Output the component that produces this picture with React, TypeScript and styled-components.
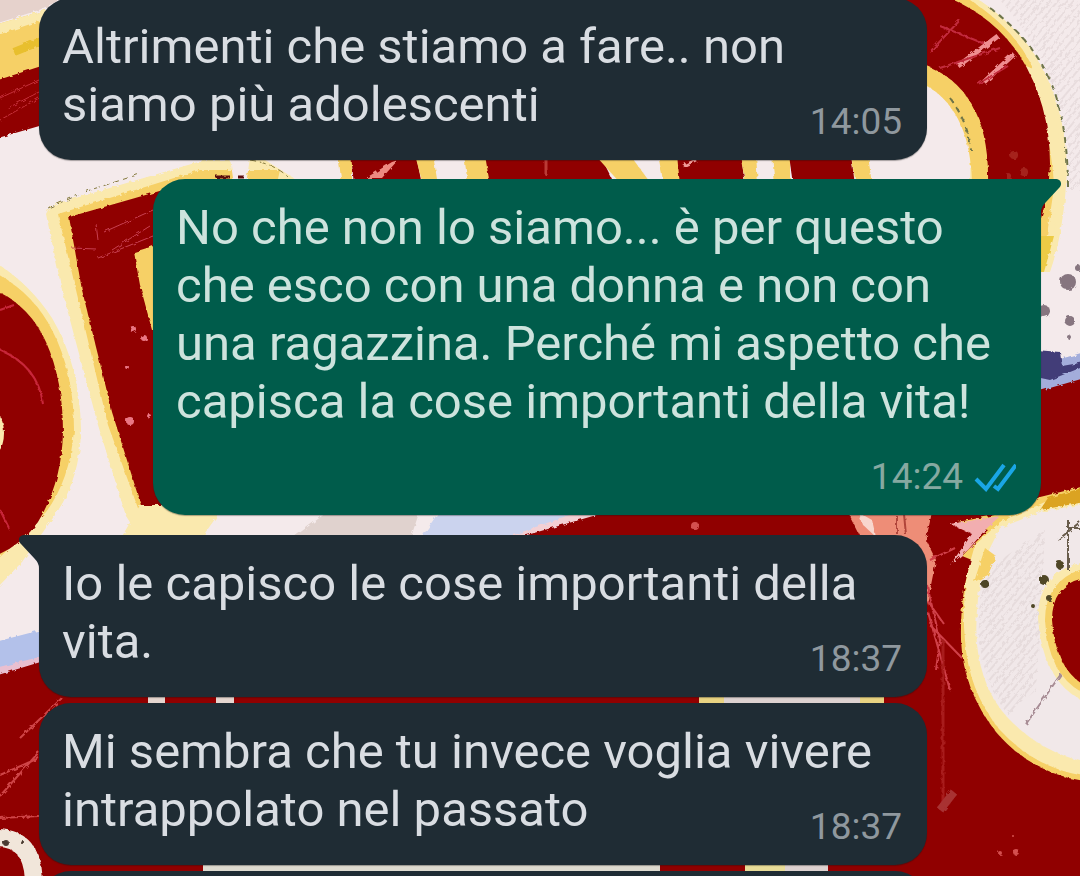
import React from "react";
import styled, { createGlobalStyle, css } from "styled-components";

const INCOMING = "#1f2c34";
const OUTGOING = "#005c4b";

const GlobalStyle = createGlobalStyle`
  *, *::before, *::after { box-sizing: border-box; }
  body {
    margin: 0;
    background: #8f0000;
    font-family: Roboto, "Liberation Sans", sans-serif;
  }
`;

const Screen = styled.main`
  position: relative;
  height: 100vh;
  overflow: hidden;
  isolation: isolate;
`;

const WallpaperSvg = styled.svg`
  position: absolute;
  inset: 0;
  z-index: -1;
  width: 100%;
  height: 100%;
`;

const Thread = styled.ol`
  display: flex;
  flex-direction: column;
  list-style: none;
  margin: -2px 0 0;
  padding: 0 39px;
`;

const Row = styled.li<{ $own: boolean; $gap: number }>`
  display: flex;
  justify-content: ${(p) => (p.$own ? "flex-end" : "flex-start")};
  margin-top: ${(p) => p.$gap}px;
`;

const Bubble = styled.article<{ $own: boolean; $tail: boolean }>`
  position: relative;
  display: flow-root;
  width: calc(100% - 114px);
  min-height: 162px;
  padding: 20px 25px 16px 23px;
  border-radius: 32px;
  font-size: 49px;
  line-height: 58px;
  color: ${(p) => (p.$own ? "#cde3dd" : "#d9dde2")};
  background: ${(p) => (p.$own ? OUTGOING : INCOMING)};
  box-shadow: 0 1px 1px rgba(20, 20, 20, 0.35);
  ${(p) =>
    p.$tail &&
    (p.$own
      ? css`border-top-right-radius: 0;`
      : css`border-top-left-radius: 0;`)}
`;

const TailSvg = styled.svg<{ $own: boolean }>`
  position: absolute;
  top: 0;
  width: 21px;
  height: 34px;
  fill: ${(p) => (p.$own ? OUTGOING : INCOMING)};
  ${(p) => (p.$own ? "left: 100%;" : "right: 100%; transform: scaleX(-1);")}
`;

const Text = styled.span`
  overflow-wrap: break-word;
`;

/* Floats beside the last line when there is room, and drops below it otherwise. */
const Meta = styled.span<{ $own: boolean }>`
  float: right;
  display: flex;
  align-items: center;
  gap: 11px;
  margin-top: 24px;
  font-size: 37px;
  line-height: 44px;
  color: ${(p) => (p.$own ? "#86a9a1" : "#8f989e")};
`;

const CheckSvg = styled.svg`
  width: 42px;
  height: 30px;
  fill: none;
  stroke: #1aa6e6;
  stroke-width: 4;
`;

type Message = {
  text: string;
  time: string;
  own?: boolean;
  tail?: boolean;
  gap: number;
};

const messages: Message[] = [
  { text: "Altrimenti che stiamo a fare.. non siamo più adolescenti", time: "14:05", gap: 0 },
  {
    text: "No che non lo siamo... è per questo che esco con una donna e non con una ragazzina. Perché mi aspetto che capisca la cose importanti della vita!",
    time: "14:24",
    own: true,
    tail: true,
    gap: 19,
  },
  { text: "Io le capisco le cose importanti della vita.", time: "18:37", tail: true, gap: 20 },
  { text: "Mi sembra che tu invece voglia vivere intrappolato nel passato", time: "18:37", gap: 6 },
];

const RED = "#900000";
const GOLD = "#f6d066";
const PALE = "#fae9ae";
const PAPER = "#f4eaeb";

function Wallpaper() {
  return (
    <WallpaperSvg viewBox="0 0 1080 876" preserveAspectRatio="xMidYMid slice" aria-hidden="true">
      <defs>
        <filter id="rough" x="0" y="0" width="100%" height="100%">
          <feTurbulence type="fractalNoise" baseFrequency="0.22" numOctaves="2" seed="4" result="n" />
          <feDisplacementMap in="SourceGraphic" in2="n" scale="4" />
        </filter>
        <pattern id="hatch" width="6" height="6" patternUnits="userSpaceOnUse" patternTransform="rotate(-50)">
          <path d="M0 1H6" stroke="#cdbcbd" strokeWidth="1" opacity="0.6" />
        </pattern>
      </defs>
      <rect width="1080" height="876" fill={PAPER} />
      <g filter="url(#rough)">
        {/* top left stroke */}
        <path d="M-5 -5H70L39 10L-5 24Z" fill="#e6d2cc" />
        <path d="M-5 25L60 6V70L-5 82Z" fill={GOLD} />
        <path d="M-5 25L60 6V14L-5 36Z" fill={PALE} />
        <path d="M14 52L44 40" stroke="#e8bf2e" strokeWidth="8" />
        <path d="M-5 81L60 60V120L-5 139Z" fill={RED} />
        <path d="M0 98L39 80M0 120L39 98M8 108L39 92" stroke="#c5303a" strokeWidth="1" />

        {/* slanted letter behind the second bubble */}
        <path d="M46 214Q48 206 62 202L205 160H265L300 182L215 516L140 538L126 516L98 425L62 290Z" fill={PALE} />
        <path d="M58 214L200 170H280L200 520L143 522L108 425L76 290Z" fill={GOLD} />
        <path d="M69 217L170 188L210 520L145 518L112 412L82 290Z" fill={RED} />
        <path d="M230 158H250L246 184H234Z" fill={PAPER} />
        <path d="M134 252L160 244V330H152L140 285Z" fill={GOLD} />
        <path d="M72 248L96 249M96 224L98 240M104 232L153 210M98 258L153 236M112 250L150 226" stroke="#c94052" strokeWidth="1" />
        <path d="M48 208L90 190L140 174M250 160Q275 164 288 177" fill="none" stroke="#83783c" strokeWidth="1" strokeDasharray="6 4" />
        <path d="M216 177H230M238 177H244" stroke="#5c0b08" strokeWidth="3" />
        <g fill="#ea7784">
          <circle cx="133" cy="329" r="3" />
          <circle cx="144" cy="338" r="3" />
          <circle cx="130" cy="421" r="4" />
          <circle cx="127" cy="367" r="2" />
          <circle cx="149" cy="416" r="2" />
        </g>

        {/* round letter at the left edge */}
        <path d="M-5 262Q30 284 52 318Q80 365 81 430Q80 480 55 515L22 562L-5 590Z" fill={PALE} />
        <path d="M-5 272Q34 294 52 330Q74 372 74 430Q70 480 46 512L-5 562Z" fill={GOLD} />
        <path d="M-5 290Q30 306 46 342Q63 380 63 432Q62 482 38 522Q22 545 -5 556Z" fill={RED} />
        <path d="M-5 410Q4 418 4 433Q4 448 -5 456Z" fill={PALE} />
        <path d="M0 310L14 305M0 350Q38 366 43 404M0 510L10 530" fill="none" stroke="#c8283a" strokeWidth="2" />

        {/* strokes showing between the first two bubbles */}
        <path d="M338 155H352V185H342Z" fill={GOLD} />
        <path d="M351 155H416L422 185H354Z" fill={RED} />
        <path d="M392 162L366 178H382L398 160Z" fill="#ee8a80" />
        <path d="M415 155H490V185H423Z" fill={GOLD} />
        <path d="M433 155H464L468 185H438Z" fill={PAPER} />
        <path d="M485 155H600L615 185H490Z" fill={RED} />
        <path d="M595 155H677L681 185H622Z" fill={GOLD} />
        <path d="M630 155H658L664 185H652Z" fill={PAPER} />
        <path d="M677 155H741L745 185H680Z" fill={RED} />
        <path d="M740 155H790V185H746Z" fill={GOLD} />
        <path d="M756 155H772L775 185H758Z" fill={PAPER} />
        <path d="M789 155H851L855 185H793Z" fill={RED} />
        <path d="M851 155H868L872 185H856Z" fill={GOLD} />
        <path d="M546 160V176" stroke="#bb3a34" strokeWidth="3" />
        <path d="M683 166L696 160" stroke="#ef9a96" strokeWidth="3" />

        {/* bowl of the top right letter */}
        <path d="M900 -5H972Q1014 22 1037 58Q1066 108 1067 170Q1064 232 1050 272H1036V182H970Q974 100 920 84Z" fill={PALE} />
        <path d="M900 -5H962Q1010 24 1030 62Q1054 112 1057 168L1042 268H1036V182H972Q970 106 920 82Z" fill={GOLD} />
        <path d="M1036 70Q1062 116 1062 180L1054 232Q1060 150 1026 66Z" fill={PALE} />
        <path d="M900 -5H942Q992 14 1020 56Q1050 104 1050 164Q1049 194 1040 222L1036 182H988Q990 88 922 64Z" fill={RED} />
        <path d="M998 36L958 66M1014 54L984 82" stroke="#ef8d90" strokeWidth="5" />
        <path d="M940 68L1000 48M978 84L1008 66M940 26L985 44M930 52L960 20" stroke="#c22c3c" strokeWidth="2" />
        <path d="M1000 0L1085 -5V190L1070 190Q1072 80 1000 0Z" fill="url(#hatch)" />
        <path d="M990 8Q1036 42 1054 90Q1068 130 1068 190M950 98Q968 122 971 150" fill="none" stroke="#6e7448" strokeWidth="2" strokeDasharray="6 5" />
        <g fill="#a5231f">
          <circle cx="1014" cy="155" r="4" />
          <circle cx="1024" cy="172" r="4" />
          <circle cx="1009" cy="177" r="3" />
        </g>
        <path d="M1036 236H1054L1044 272H1036Z" fill="#eccb45" />

        {/* ink spots and blue wash right of the outgoing bubble */}
        <g fill="#86757f">
          <circle cx="1068" cy="282" r="8" />
          <circle cx="1044" cy="311" r="6" />
          <circle cx="1070" cy="321" r="5" />
          <circle cx="1078" cy="268" r="3" />
          <circle cx="1069" cy="337" r="2" />
        </g>
        <path d="M1036 366L1085 352V385L1036 396Z" fill="#a3addb" />
        <path d="M1036 350L1060 352L1062 366L1085 362V366L1050 380L1036 377Z" fill="#433e78" />
        <path d="M1036 392L1085 378V500L1036 520Z" fill={RED} />

        {/* wash under the outgoing bubble */}
        <path d="M140 505H225L200 540H120Z" fill={PALE} />
        <path d="M290 540L330 510H420L410 540Z" fill="#e0d2ce" />
        <path d="M420 540L440 510H600L520 540Z" fill="#cbd3ee" />
        <path d="M500 540L572 514H610L530 540Z" fill="#f3d0d4" />

        {/* red field filling the lower part */}
        <path d="M-5 642L60 625V668L-5 678Z" fill="#b3c1ea" />
        <path d="M-5 668L60 652V670L-5 680Z" fill="#e9bfd0" />
        <path d="M-5 676L60 656L520 537L600 514L1085 495V885H-5Z" fill={RED} />
        <path d="M0 796L39 752M0 775L39 758M20 738L62 698M0 818L39 816" stroke="#cf4446" strokeWidth="2" />
        <path d="M-5 838Q34 836 34 885" fill="none" stroke="#f1e6da" strokeWidth="18" />
        <circle cx="6" cy="843" r="3" fill="#4a3a30" />
        <circle cx="22" cy="842" r="2" fill="#4a3a30" />

        {/* pink splash */}
        <path d="M848 512H932L926 540L936 560L926 610L915 545L885 540L860 536Z" fill="#ee8d77" />
        <path d="M858 512L872 520L876 537L862 524Z" fill="#f8d6cd" />
        <path d="M904 514L906 535M897 516V534" stroke="#b0453a" strokeWidth="2" />
        <path d="M927 585L940 640L936 670M928 612L950 690M930 625L962 658M930 560L955 548M927 600L944 624" fill="none" stroke="#d04048" strokeWidth="2" />
        <path d="M943 640V810" stroke="#a81a1c" strokeWidth="3" />
        <path d="M940 810L954 792" stroke="#a83033" strokeWidth="8" />

        {/* large ring at the right edge */}
        <path d="M1085 486L1040 497L1000 514L958 522L988 530L962 556L972 560Q960 590 961 640Q963 690 996 732Q1032 774 1085 781Z" fill={GOLD} />
        <path d="M1085 492L1045 502L1000 522L975 545Q960 590 965 640Q968 690 999 729Q1034 768 1085 776Z" fill={PALE} />
        <path d="M1085 504L1040 512L1000 528L984 560Q974 610 977 645Q982 690 1008 718Q1040 752 1085 762Z" fill="#f1e8e9" />
        <path d="M985 570L1045 530L1036 690L1008 715Q965 660 985 570Z" fill="url(#hatch)" />
        <path d="M1085 487L1048 498L1040 510L1085 502Z" fill="#dba322" />
        <path d="M985 548L996 556L988 575L974 582Z" fill={GOLD} />
        <path d="M950 524L1000 516L985 530L968 550L950 565L972 534Z" fill="#f2aeb0" />
        <path d="M1085 562Q1038 570 1038 618Q1042 682 1085 702Z" fill={PALE} />
        <path d="M1085 568Q1045 580 1045 620Q1048 676 1085 694Z" fill={GOLD} />
        <path d="M1085 578Q1052 584 1052 620Q1055 668 1085 686Z" fill={RED} />
        <path d="M1061 674L1026 724" stroke="#a78c94" strokeWidth="2" />
        <path d="M1068 520V570M1068 528H1080M1058 540L1080 522" stroke="#685b4b" strokeWidth="2" />
        <g fill="#504726">
          <circle cx="985" cy="584" r="4" />
          <circle cx="1044" cy="580" r="5" />
          <circle cx="1049" cy="598" r="3" />
          <circle cx="1060" cy="565" r="4" />
          <circle cx="1033" cy="606" r="2" />
        </g>
        <g fill="#d4504f">
          <circle cx="1016" cy="852" r="3" />
          <circle cx="1000" cy="853" r="2" />
          <circle cx="1013" cy="836" r="1" />
          <circle cx="695" cy="526" r="4" />
        </g>
      </g>

      {/* slivers between the lower bubbles */}
      <g>
        <path d="M148 697H165V704H148ZM216 697H234V704H216Z" fill="#e5d6cf" />
        <path d="M699 697H884V704H699Z" fill="#ddd2d0" />
        <path d="M699 697H724V704H699ZM860 697H884V704H860Z" fill="#e8d382" />
        <path d="M203 864H660V872H203Z" fill="#dedbd0" />
        <path d="M745 864H828V872H745Z" fill="#ddd2d0" />
        <path d="M745 864H785V872H745Z" fill="#e8dc98" />
      </g>
    </WallpaperSvg>
  );
}

function Tail({ own }: { own: boolean }) {
  return (
    <TailSvg $own={own} viewBox="0 0 21 34" aria-hidden="true">
      <path d="M-1 0H14C20 0 22 5 18 9L5 23Q0 28 0 33H-1Z" />
    </TailSvg>
  );
}

function ReadReceipt() {
  return (
    <CheckSvg viewBox="0 0 42 30" role="img" aria-label="Letto">
      <path d="M2 17L12 27L30 3" />
      <path d="M20 24L24 27L42 3" />
    </CheckSvg>
  );
}

export default function App() {
  return (
    <>
      <GlobalStyle />
      <Screen>
        <Wallpaper />
        <Thread>
          {messages.map(({ text, time, own = false, tail = false, gap }, i) => (
            <Row key={i} $own={own} $gap={gap}>
              <Bubble $own={own} $tail={tail}>
                {tail && <Tail own={own} />}
                <Text>{text}</Text>
                <Meta $own={own}>
                  <time>{time}</time>
                  {own && <ReadReceipt />}
                </Meta>
              </Bubble>
            </Row>
          ))}
          <Row $own={false} $gap={6}>
            <Bubble $own={false} $tail={false} />
          </Row>
        </Thread>
      </Screen>
    </>
  );
}
